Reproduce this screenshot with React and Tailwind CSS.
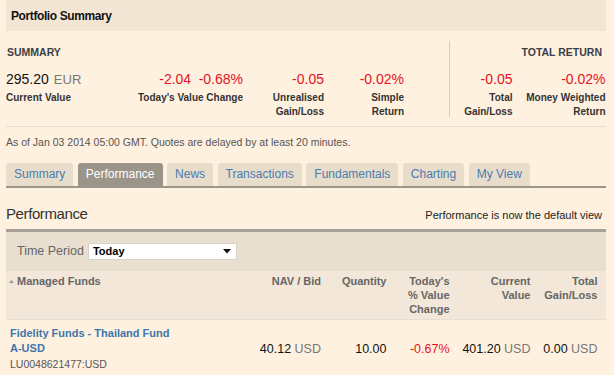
const tabs = ["Summary", "Performance", "News", "Transactions", "Fundamentals", "Charting", "My View"];

function Stat({ width, align = "text-right", value, label }) {
  return (
    <div className={"flex flex-col " + width + " " + align}>
      <div className="h-[16px] leading-[16px] text-[14px] whitespace-nowrap">{value}</div>
      <div className="mt-[4px] text-[10px] font-bold leading-[14px] text-[#333]">{label}</div>
    </div>
  );
}

export default function App() {
  return (
    <div className="min-h-screen bg-[#fff1e0] font-['Liberation_Sans',Arial,sans-serif] text-[#333]">
      <div className="ml-[6px] mr-[8px]">
        {/* title bar */}
        <div className="h-[31px] bg-[#f2e5d4] pl-[5px] flex items-center">
          <h1 className="text-[12px] font-bold tracking-[-0.4px] text-[#111]">Portfolio Summary</h1>
        </div>

        {/* summary figures */}
        <div className="flex pt-[10px] pb-[7px] border-b border-[#e8ddd0]">
          <div className="flex-1 flex flex-col">
            <div className="mt-[4px] h-[14px] leading-[14px] pl-px text-[10.5px] font-bold text-[#3a3f47]">SUMMARY</div>
            <div className="mt-[12px] flex">
              <Stat
                width="w-[110px]"
                align="text-left"
                value={
                  <>
                    <span className="text-[#111]">295.20</span>
                    <span className="ml-[5px] text-[13px] text-[#777]">EUR</span>
                  </>
                }
                label="Current Value"
              />
              <Stat
                width="w-[127px]"
                value={
                  <span className="text-[#e3131e]">
                    -2.04<span className="ml-[7.5px]">-0.68%</span>
                  </span>
                }
                label="Today's Value Change"
              />
              <Stat
                width="w-[81px]"
                value={<span className="text-[#e3131e]">-0.05</span>}
                label={<>Unrealised<br />Gain/Loss</>}
              />
              <Stat
                width="w-[80px]"
                value={<span className="text-[#e3131e]">-0.02%</span>}
                label={<>Simple<br />Return</>}
              />
            </div>
          </div>
          <div className="w-[157px] h-[76px] self-start border-l border-[#d2ccc3] flex flex-col">
            <div className="mt-[4px] h-[14px] leading-[14px] pr-[4px] text-right text-[10.5px] font-bold text-[#3a3f47]">TOTAL RETURN</div>
            <div className="mt-[12px] flex">
              <Stat
                width="w-[62.5px]"
                value={<span className="text-[#e3131e]">-0.05</span>}
                label={<>Total<br />Gain/Loss</>}
              />
              <Stat
                width="w-[93px]"
                value={<span className="text-[#e3131e]">-0.02%</span>}
                label={<>Money Weighted<br />Return</>}
              />
            </div>
          </div>
        </div>

        <p className="mt-[8px] text-[10.5px] leading-[14px] text-[#555]">
          As of Jan 03 2014 05:00 GMT. Quotes are delayed by at least 20 minutes.
        </p>

        {/* tabs */}
        <div className="mt-[14px] flex gap-[4.5px] border-b-2 border-[#9d968c]">
          {tabs.map((t) => (
            <div
              key={t}
              className={
                t === "Performance"
                  ? "h-[23px] px-2 leading-[23px] text-[12px] rounded-t-[3px] bg-[#9b9489] text-white"
                  : "h-[23px] px-2 leading-[23px] text-[12px] rounded-t-[3px] bg-[#e8dccb] text-[#4a7db0]"
              }
            >
              {t}
            </div>
          ))}
        </div>

        {/* performance heading */}
        <div className="mt-[16px] flex items-baseline justify-between">
          <h2 className="text-[15px] leading-[20px] tracking-[-0.4px] text-[#333]">Performance</h2>
          <span className="pr-[4px] text-[11px] text-[#222]">Performance is now the default view</span>
        </div>
        <div className="mt-[5px] h-[3px] bg-[#a7a199]" />

        {/* time period filter */}
        <div className="h-[39px] bg-[#e9dfd0] flex items-center pl-[11px]">
          <span className="text-[12.5px] text-[#666]">Time Period</span>
          <div className="ml-[4px] w-[149px] h-[17px] bg-white border border-[#d8d2c8] flex items-center justify-between pl-[4px] pr-[5px]">
            <span className="text-[11px] font-bold text-black">Today</span>
            <svg width="8" height="5" viewBox="0 0 8 5">
              <path d="M0 0h8L4 4.5z" fill="#111" />
            </svg>
          </div>
        </div>

        {/* table header */}
        <div className="grid grid-cols-[244px_71px_65.5px_63px_81px_67px] pr-[8px] h-[49px] pt-[3px] bg-[#f2e7d8] border-b border-[#e8dfd2] text-[11px] font-bold leading-[14px] text-[#666]">
          <div className="flex items-center pl-[3px]">
            <svg width="5" height="3" viewBox="0 0 5 3" className="self-start mt-[6px]">
              <path d="M0 3h5L2.5 0z" fill="#999" />
            </svg>
            <span className="ml-[3px] self-start">Managed Funds</span>
          </div>
          <div className="text-right">NAV / Bid</div>
          <div className="text-right">Quantity</div>
          <div className="text-right">Today's<br />% Value<br />Change</div>
          <div className="text-right">Current<br />Value</div>
          <div className="text-right">Total<br />Gain/Loss</div>
        </div>

        {/* data row */}
        <div className="grid grid-cols-[244px_71px_65.5px_63px_81px_67px] pr-[8px] pt-[6px] items-center text-[12.5px] leading-[16px] text-[#111]">
          <div className="pl-[4px]">
            <div className="text-[11px] font-bold leading-[15px] text-[#3e76ab]">
              Fidelity Funds - Thailand Fund<br />A-USD
            </div>
            <div className="text-[10.5px] leading-[16px] text-[#555]">LU0048621477:USD</div>
          </div>
          <div className="text-right whitespace-nowrap">40.12 <span className="text-[#777]">USD</span></div>
          <div className="text-right">10.00</div>
          <div className="text-right text-[#e3131e]">-0.67%</div>
          <div className="text-right whitespace-nowrap">401.20 <span className="text-[#777]">USD</span></div>
          <div className="text-right whitespace-nowrap">0.00 <span className="text-[#777]">USD</span></div>
        </div>
      </div>
    </div>
  );
}
